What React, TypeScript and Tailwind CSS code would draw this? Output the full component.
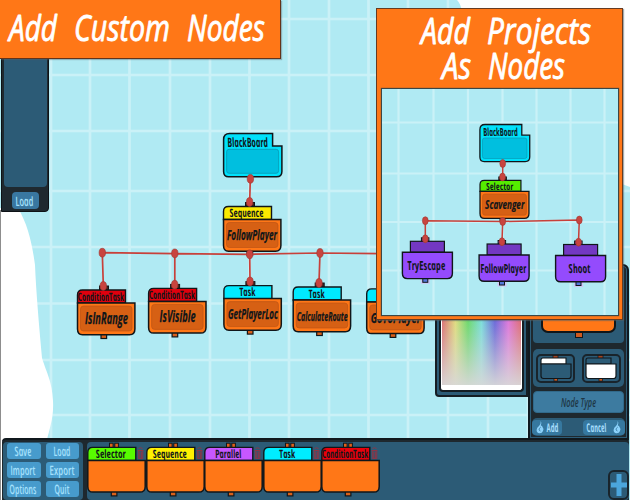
import React from "react";

const HAND = '"Open Sans", "Noto Sans", sans-serif';
const INK = "#10161a";
const WIRE = "#c8403a";

type TextProps = {
  x: number;
  y: number;
  w: number;
  size: number;
  children: string;
  fill?: string;
  weight?: number;
  upright?: boolean;
  pen?: number;
};

/* Condensed hand-style lettering stretched to a fixed width, with rounded pen strokes. */
function Hand({ x, y, w, size, children, fill = INK, weight = 700, upright, pen = 0 }: TextProps) {
  return (
    <text
      transform={`translate(${x} ${y})${upright ? " skewX(9)" : ""}`}
      textLength={w}
      lengthAdjust="spacingAndGlyphs"
      fontFamily={HAND}
      fontStyle="italic"
      fontSize={size}
      fontWeight={weight}
      fill={fill}
      stroke={pen ? fill : "none"}
      strokeWidth={pen}
      strokeLinejoin="round"
    >
      {children}
    </text>
  );
}

function Word({ w, h, size, base, children, fill = "#fff", weight = 400, upright, pen }: {
  w: number; h: number; size: number; base: number; children: string; fill?: string; weight?: number; upright?: boolean; pen?: number;
}) {
  return (
    <svg width={w} height={h} className="block shrink-0 overflow-visible">
      <Hand x={0} y={base} w={w} size={size} fill={fill} weight={weight} upright={upright} pen={pen}>{children}</Hand>
    </svg>
  );
}

function TaskNode({ x, y, k = 1, tab, label, lx, lw, name, nx = 0, nw = 0, ns = 14 }: {
  x: number; y: number; k?: number; tab: string; label: string; lx: number; lw: number;
  name?: string; nx?: number; nw?: number; ns?: number;
}) {
  return (
    <g transform={`translate(${x} ${y}) scale(${k})`}>
      {name ? (
        <rect x="22" y="-4" width="9" height="5" fill="#43201a" stroke={INK} />
      ) : (
        <g fill="#e0601a" stroke={INK}>
          <rect x="21.7" y="-4.2" width="3.6" height="5" />
          <rect x="27" y="-4.2" width="3.6" height="5" />
        </g>
      )}
      <rect x="23.5" y="44" width="5.6" height="4.5" fill="#d9601b" stroke={INK} strokeWidth="1.2" />
      <path d="M0 13V5Q0 0 5 0H48V13Z" fill={tab} stroke={INK} strokeWidth="1.4" />
      <path d="M0 13H57.4V39Q57.4 44.7 52 44.7H5Q0 44.7 0 39Z" fill="#ff7717" stroke={INK} strokeWidth="1.5" />
      {name && <rect x="3" y="16" width="51.5" height="25" rx="3" fill="#d66014" stroke="#bd5516" strokeWidth=".7" />}
      <Hand x={lx} y={10.8} w={lw} size={11.5} upright>{label}</Hand>
      {name && <Hand x={nx} y={33.8} w={nw} size={ns + 0.5} pen={0.25}>{name}</Hand>}
    </g>
  );
}

function BlackBoard({ x, y, k = 1 }: { x: number; y: number; k?: number }) {
  return (
    <g transform={`translate(${x} ${y}) scale(${k})`}>
      <path d="M0 6Q0 0 6 0H49V12.5H58.3V38Q58.3 43.3 53 43.3H5Q0 43.3 0 38Z" fill="#00e1fb" stroke={INK} strokeWidth="1.5" />
      <rect x="3" y="15.8" width="52" height="24" rx="2.5" fill="#00bfdf" stroke="#0799b4" strokeWidth=".8" />
      <Hand x={4.5} y={13.2} w={40.5} size={13} upright>BlackBoard</Hand>
    </g>
  );
}

function ProjectNode({ x, y, name, nx, nw }: { x: number; y: number; name: string; nx: number; nw: number }) {
  return (
    <g transform={`translate(${x} ${y})`}>
      <rect x="19" y="-3.5" width="7.5" height="4" fill="#5b309c" stroke={INK} />
      <rect x="18.5" y="37" width="9" height="5.5" fill="#cfc6f5" />
      <rect x="20.4" y="37" width="5" height="4" fill="#5578dc" stroke={INK} />
      <rect x="8" y="0" width="34" height="11" fill="#7338c2" stroke={INK} strokeWidth="1.2" />
      <path d="M0 11H50V32Q50 37.3 45 37.3H5Q0 37.3 0 32Z" fill="#944bfd" stroke={INK} strokeWidth="1.4" />
      <Hand x={nx} y={28.8} w={nw} size={12.5} upright>{name}</Hand>
    </g>
  );
}

function Wires({ lines, dots, k = 1 }: { lines: string; dots: number[][]; k?: number }) {
  return (
    <g>
      <path d={lines} fill="none" stroke={WIRE} strokeWidth={1.7 * k} />
      {dots.map(([cx, cy], i) => (
        <ellipse key={i} cx={cx} cy={cy} rx={3.2 * k} ry={4.4 * k} fill="#c8443f" stroke="#9d3733" strokeWidth=".6" />
      ))}
    </g>
  );
}

function GridLines({ xs, ys, w, h, sw }: { xs: number[]; ys: number[]; w: number; h: number; sw: number }) {
  return (
    <g stroke="#caf1f7" strokeWidth={sw}>
      {xs.map((x) => <path key={"x" + x} d={`M${x} 0V${h}`} />)}
      {ys.map((y) => <path key={"y" + y} d={`M0 ${y}H${w}`} />)}
    </g>
  );
}

function MainDiagram() {
  return (
    <svg width="630" height="500" className="absolute left-0 top-0">
      <rect width="630" height="500" fill="#b0eaf3" />
      <GridLines w={630} h={500} sw={2.7}
        xs={[51, 90, 129.5, 170, 210, 249.5, 289, 329, 368.5, 408, 448, 488, 528]}
        ys={[19, 75, 131, 191, 247, 303.5, 360, 415]} />
      <path d="M457 0Q461 4 462 12L500 100H622V184L630 187V0Z" fill="#fdfefe" />
      <path d="M0 208H18C28 225 32 243 35 265C36 290 39 325 42 358C47 374 52 381 53 401C54 418 49 430 47 440V500H0Z" fill="#fff" />
      <path d="M.5 210V500" stroke="#8d8d8d" />
      <BlackBoard x={223.6} y={133.5} />
      <TaskNode x={223.5} y={206.5} tab="#fbea00" label="Sequence" lx={6.5} lw={34} name="FollowPlayer" nx={3.5} nw={50} />
      <TaskNode x={77.5} y={290} tab="#e0000d" label="ConditionTask" lx={0.8} lw={46} name="IsInRange" nx={7.5} nw={43} ns={15} />
      <TaskNode x={148.6} y={288.4} tab="#e0000d" label="ConditionTask" lx={0.8} lw={46} name="IsVisible" nx={11} nw={36} ns={15} />
      <TaskNode x={223.9} y={285.6} tab="#00eaff" label="Task" lx={16} lw={16} name="GetPlayerLoc" nx={4} nw={50} ns={13} />
      <TaskNode x={293.2} y={287} tab="#00eaff" label="Task" lx={16} lw={16} name="CalculateRoute" nx={3.5} nw={51} ns={12.5} />
      <TaskNode x={366.7} y={288.9} tab="#00eaff" label="Task" lx={16} lw={16} name="GoToPlayer" nx={4} nw={50} />
      <Wires
        lines="M102.3 252.7L174.8 253.7L249.7 254.3L320 253L380 253.6M102.3 252.7L103.3 285M174.8 253.7V284M249.7 254.3L250 281M320 253L319 282.5M250.3 178.7L249.7 202"
        dots={[[102.3, 252.7], [174.8, 253.4], [249.7, 254.3], [320, 253], [103.3, 286], [174.7, 284.7], [250, 281.5], [319, 283], [250.4, 178.8], [249.6, 202]]}
      />
    </svg>
  );
}

function ProjectDiagram() {
  return (
    <svg width="236" height="227" viewBox="382 89 236 227" className="block">
      <rect x="381" y="88" width="238" height="229" fill="#b0eaf3" />
      <GridLines w={630} h={320} sw={2.2} xs={[398.5, 433.5, 468, 502.5, 536.5, 570.5, 604.5]} ys={[122.5, 173.5, 222, 270.5]} />
      <BlackBoard x={479.9} y={124.5} k={0.855} />
      <TaskNode x={480} y={180.3} k={0.853} tab="#55ec00" label="Selector" lx={7.5} lw={32} name="Scavenger" nx={6} nw={46} ns={15} />
      <ProjectNode x={402.4} y={241.3} name="TryEscape" nx={5.5} nw={38} />
      <ProjectNode x={479.1} y={244} name="FollowPlayer" nx={1.8} nw={46} />
      <ProjectNode x={555.6} y={244.5} name="Shoot" nx={13.5} nw={22} />
      <Wires k={0.9}
        lines="M425.3 220.7L502.7 221.5L579.3 220M425.3 220.7V239M502.7 221.5L502 241.5M579.3 220L578.5 242M502.7 163.5V177"
        dots={[[425.3, 220.7], [502.7, 221.5], [579.3, 220], [425.3, 238.8], [502, 241.7], [578.5, 242.2], [502.7, 163.5], [502.5, 177]]}
      />
    </svg>
  );
}

function StylePreview({ header }: { header: boolean }) {
  return (
    <div className="flex h-[29px] w-[39px] items-center justify-center rounded-[5px] border-2 border-[#19242b] bg-[#2c5b76]">
      <svg width="34" height="27" viewBox="0 0 34 27" className="block shrink-0">
        <rect x="14" y="0.5" width="5" height="3" fill="#a14422" stroke={INK} strokeWidth=".7" />
        <rect x="15" y="23.5" width="3.5" height="2.5" fill="#d55b20" stroke={INK} strokeWidth=".7" />
        <path d="M2 9V5Q2 3 4 3H27V9Z" fill={header ? "#fff" : "#2c5b76"} stroke={INK} strokeWidth="1.1" />
        <path d="M2 9H32V21Q32 23.5 29.5 23.5H4.5Q2 23.5 2 21Z" fill={header ? "#2c5b76" : "#fff"} stroke={INK} strokeWidth="1.2" />
      </svg>
    </div>
  );
}

function Flame() {
  return (
    <svg width="8" height="13" viewBox="0 0 8 13" className="block shrink-0">
      <path d="M4.8 0Q6 2.2 4.8 4.5L6 5Q8 7.5 7 10Q6 12.5 3.5 12.3Q.5 12 .6 9Q.8 6.5 3 5Q5 3 4.8 0Z" fill="#8cd2fb" />
      <path d="M4.8 6Q3 7 3 9L4.5 10" fill="none" stroke="#36799f" strokeWidth=".8" />
    </svg>
  );
}

function Inspector() {
  return (
    <div className="absolute left-[435px] top-[264px] flex h-[176px] w-[194px] items-start">
      <div className="h-[133px] w-[93px] shrink-0 rounded-bl-[4px] border-2 border-[#151d23] bg-[#2c5b76] px-[2px] pb-[3px]">
        <div className="flex h-full flex-col overflow-hidden rounded-b-[4px] border-2 border-t-0 border-[#151d23] bg-white px-px pb-[5px]">
          <div className="flex-1 bg-[linear-gradient(to_bottom,rgba(205,205,205,0)_32%,rgba(216,216,216,.95)_100%),linear-gradient(to_right,#dc5960,#e1de6c_17%,#54d955_33%,#68dfdc_50%,#5350d9_67%,#df62dc_84%,#df555d)]" />
        </div>
      </div>
      <div className="flex h-full flex-1 flex-col rounded-tr-[6px] border-2 border-[#101920] bg-[#1e282e] px-px shadow-[inset_0_0_0_1px_#2c5b76]">
        <div className="mx-[2px] flex h-[77px] shrink-0 flex-col items-center rounded-[4px] bg-[#2c5b76]">
          <div className="h-[67px] w-[75px] rounded-b-[7px] border-2 border-[#10161a] bg-[#ff7717]" />
          <div className="-mt-px h-[6px] w-[8px] border border-[#10161a] bg-[#cf5a20]" />
        </div>
        <div className="mx-[2px] mt-[6px] flex h-[38px] shrink-0 items-center justify-around rounded-[5px] bg-[#2c5b76]">
          <StylePreview header />
          <StylePreview header={false} />
        </div>
        <div className="mx-[2px] mt-[4px] flex h-[22px] shrink-0 items-center justify-center rounded-[4px] border border-[#31698a] bg-[#3d7ba0]">
          <Word w={35} h={14} size={12.5} base={11.5} weight={600} fill="#1d3644">Node Type</Word>
        </div>
        <div className="mx-[1px] mt-[5px] flex h-[18px] shrink-0 items-center justify-between rounded-[5px] bg-[#2c5b76]">
          <div className="flex h-[15px] w-[30px] items-center justify-center gap-[3px] rounded-[4px] bg-[#36789f]">
            <Flame />
            <Word w={12} h={13} size={12} base={10.8} fill="#a5dcfb" upright weight={700}>Add</Word>
          </div>
          <div className="flex h-[15px] w-[42px] items-center justify-center gap-[6px] rounded-[4px] bg-[#36789f]">
            <Word w={20} h={13} size={12} base={10.8} fill="#a5dcfb" upright weight={700}>Cancel</Word>
            <Flame />
          </div>
        </div>
      </div>
    </div>
  );
}

const menu: [string, number][] = [["Save", 17], ["Load", 17], ["Import", 25], ["Export", 25], ["Options", 27], ["Quit", 15]];

const palette = [
  { tab: "#58fb00", label: "Selector", lx: 8.5, lw: 30 },
  { tab: "#fff000", label: "Sequence", lx: 6.5, lw: 34 },
  { tab: "#c757ff", label: "Parallel", lx: 11, lw: 26 },
  { tab: "#00edff", label: "Task", lx: 16, lw: 16 },
  { tab: "#e8000b", label: "ConditionTask", lx: 0.8, lw: 46 },
];

function PaletteItem({ item }: { item: (typeof palette)[number] }) {
  return (
    <svg width="58.6" height="55" className="block shrink-0 overflow-visible">
      <TaskNode x={0.8} y={5.4} {...item} />
      <g fill="none" stroke="#8c3547" strokeWidth="1">
        <path d="M51.5 6.5Q53.5 5 55.5 6.5M50.6 8.500H56.4M51.3 9V16.5H55.8V9M52.8 9.5V16M54.4 9.5V16" />
      </g>
    </svg>
  );
}

function Toolbar() {
  return (
    <div className="relative ml-[2px] mr-[1px] flex h-[62px] shrink-0 rounded-t-[4px] border-t-2 border-[#10181d] bg-[#1e282e] pt-[2px]">
      <div className="ml-px grid w-[80px] shrink-0 grid-cols-2 content-start gap-x-[5px] gap-y-[3px] rounded-[4px] bg-[#2c5b76] px-[4px] pt-[1px]">
        {menu.map(([label, w]) => (
          <div key={label} className="flex h-[16px] items-center justify-center rounded-[3px] bg-[#479bcc]">
            <Word w={w} h={14} size={13} base={11.6} weight={600} fill="#a5e1fc" upright>{label}</Word>
          </div>
        ))}
      </div>
      <div className="ml-[4px] flex min-w-0 flex-1 items-start rounded-[4px] bg-[#2c5b76]">
        {palette.map((item) => <PaletteItem key={item.label} item={item} />)}
        <div className="ml-auto mt-[28px] flex h-[30px] w-[21px] items-center justify-center rounded-[6px] border-2 border-[#19242b] bg-[#2c5b76]">
          <svg width="16" height="22" viewBox="0 0 16 22" className="block shrink-0">
            <path d="M5.5 0H10.5V8.5H16V13.5H10.5V22H5.5V13.5H0V8.5H5.5Z" fill="#4ba6dc" />
          </svg>
        </div>
      </div>
    </div>
  );
}

export default function App() {
  return (
    <div className="relative flex h-[500px] w-[630px] flex-col overflow-hidden bg-[#b0eaf3]">
      <div className="relative h-[438px] shrink-0">
        <MainDiagram />
        <div className="absolute left-px top-[50px] flex h-[162px] w-[48px] flex-col items-center rounded-br-[4px] border border-[#0d1216] bg-[#1f292f] pb-[2px]">
          <div className="w-[43px] flex-1 rounded-b-[4px] bg-[#2c5b76]" />
          <div className="mt-[5px] flex h-[17px] w-[27px] items-center justify-center rounded-[4px] bg-[#3977a0]">
            <Word w={18} h={14} size={13} base={12} weight={600} fill="#a5e1fc" upright>Load</Word>
          </div>
        </div>
        <Inspector />
        <div className="absolute left-0 top-0 flex h-[59px] w-[281px] gap-[17px] border-b border-r border-[#63331a] bg-[#ff7717] pl-[9px] shadow-[1px_1px_1px_#54626666]">
          <Word w={48} h={58} size={37} base={40.5} pen={0.9}>Add</Word>
          <Word w={96} h={58} size={37} base={40.5} pen={0.9}>Custom</Word>
          <Word w={78} h={58} size={37} base={40.5} pen={0.9}>Nodes</Word>
        </div>
        <div className="absolute left-[376px] top-[8px] flex h-[312px] w-[247px] flex-col items-center border border-[#653b22] bg-[#ff7717] shadow-[1px_1px_1px_#54626688]">
          <div className="flex w-full gap-[17px] pl-[44px]">
            <Word w={49} h={36} size={37} base={35} pen={0.9}>Add</Word>
            <Word w={104} h={36} size={37} base={35} pen={0.9}>Projects</Word>
          </div>
          <div className="flex h-[43px] w-full gap-[17px] pl-[65px]">
            <Word w={29} h={36} size={37} base={34} pen={0.9}>As</Word>
            <Word w={77} h={36} size={37} base={34} pen={0.9}>Nodes</Word>
          </div>
          <div className="h-[228px] w-[238px] overflow-hidden border border-[#3c4646] shadow-[0_0_1px_#3c4646]">
            <ProjectDiagram />
          </div>
        </div>
      </div>
      <Toolbar />
    </div>
  );
}
